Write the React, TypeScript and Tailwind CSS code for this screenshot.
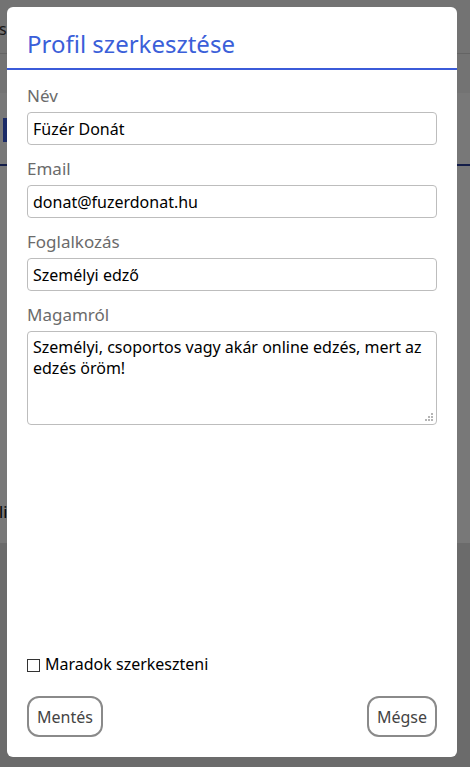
import React from "react";

export default function App() {
  return (
    <div
      className="relative w-[470px] h-[767px] overflow-hidden bg-white text-black"
      style={{ fontFamily: '"Noto Sans", "Open Sans", sans-serif' }}
    >
      {/* background page */}
      <div className="flex flex-col h-full">
        <div className="h-[54px] bg-[#f5f5f5] border-b border-[#d4d4d4] flex items-center">
          <span className="text-[16px] leading-[22px] text-[#333] -ml-[1px] mt-[4px]">s</span>
        </div>
        <div className="h-[39px] bg-[#f5f5f5]" />
        <div className="h-[73px] bg-white flex flex-col">
          <div className="mt-[25px] ml-[3px] w-[4px] h-[24px] bg-[#3b5bdb]" />
          <div className="mt-auto h-[2px] bg-[#2a3f9a]" />
        </div>
        <div className="flex-1 bg-white flex flex-col">
          <div className="h-[377px] flex items-end">
            <span className="text-[16px] leading-[22px] -ml-[1px] mb-[20px]">li</span>
          </div>
          <div className="flex-1 bg-[#e4e4e4]" />
        </div>
      </div>

      {/* overlay */}
      <div className="absolute inset-0 bg-[rgba(0,0,0,0.53)] p-[7px] flex">
        <div className="w-[450px] h-[750px] bg-white rounded-[6px] flex flex-col">
          <div className="pt-[21px] pb-[8px] px-[20px] border-b-2 border-[#3b5bd9]">
            <h2 className="text-[24px] leading-[32px] text-[#3b5fd9] font-normal">
              Profil szerkesztése
            </h2>
          </div>

          <div className="px-[20px] pt-[15px] flex flex-col">
            <Field label="Név" value="Füzér Donát" />
            <Field label="Email" value="donat@fuzerdonat.hu" />
            <Field label="Foglalkozás" value="Személyi edző" />
            <label className="text-[17px] leading-[22px] text-[#6b6b6b]">Magamról</label>
            <div className="relative mt-[5px] w-[410px] h-[94px]">
              <textarea
                className="h-[94px] w-[410px] border border-[#bdbdbd] rounded-[4px] px-[5px] pt-[5px] text-[16px] leading-[21px] text-black outline-none resize-none"
                style={{ fontFamily: '"Noto Sans", "Open Sans", sans-serif' }}
                defaultValue="Személyi, csoportos vagy akár online edzés, mert az edzés öröm!"
              />
              <svg
                className="absolute right-[3px] bottom-[3px]"
                width="9"
                height="9"
                viewBox="0 0 9 9"
              >
                <rect x="6" y="0" width="2" height="2" fill="#b5b5b5" />
                <rect x="3" y="3" width="2" height="2" fill="#b5b5b5" />
                <rect x="6" y="3" width="2" height="2" fill="#b5b5b5" />
                <rect x="0" y="6" width="2" height="2" fill="#b5b5b5" />
                <rect x="3" y="6" width="2" height="2" fill="#b5b5b5" />
                <rect x="6" y="6" width="2" height="2" fill="#b5b5b5" />
              </svg>
            </div>
          </div>

          <div className="mt-auto px-[20px] pb-[20px] flex flex-col">
            <label className="flex items-center h-[22px] text-[16px] leading-[22px] text-black">
              <span className="w-[13px] h-[13px] border border-[#333] bg-white mr-[5px] mt-[3px]" />
              Maradok szerkeszteni
            </label>
            <div className="mt-[21px] flex justify-between">
              <button className="h-[41px] px-[8px] border-2 border-[#8a8a8a] rounded-[12px] bg-white text-[16px] leading-[22px] text-[#444]">
                Mentés
              </button>
              <button className="h-[41px] px-[8px] border-2 border-[#8a8a8a] rounded-[12px] bg-white text-[16px] leading-[22px] text-[#444]">
                Mégse
              </button>
            </div>
          </div>
        </div>
      </div>
    </div>
  );
}

function Field({ label, value }: { label: string; value: string }) {
  return (
    <div className="flex flex-col mb-[13px]">
      <label className="text-[17px] leading-[22px] text-[#6b6b6b]">{label}</label>
      <input
        className="mt-[5px] h-[33px] w-[410px] border border-[#bdbdbd] rounded-[4px] px-[5px] text-[16px] text-black outline-none"
        style={{ fontFamily: '"Noto Sans", "Open Sans", sans-serif' }}
        defaultValue={value}
      />
    </div>
  );
}
